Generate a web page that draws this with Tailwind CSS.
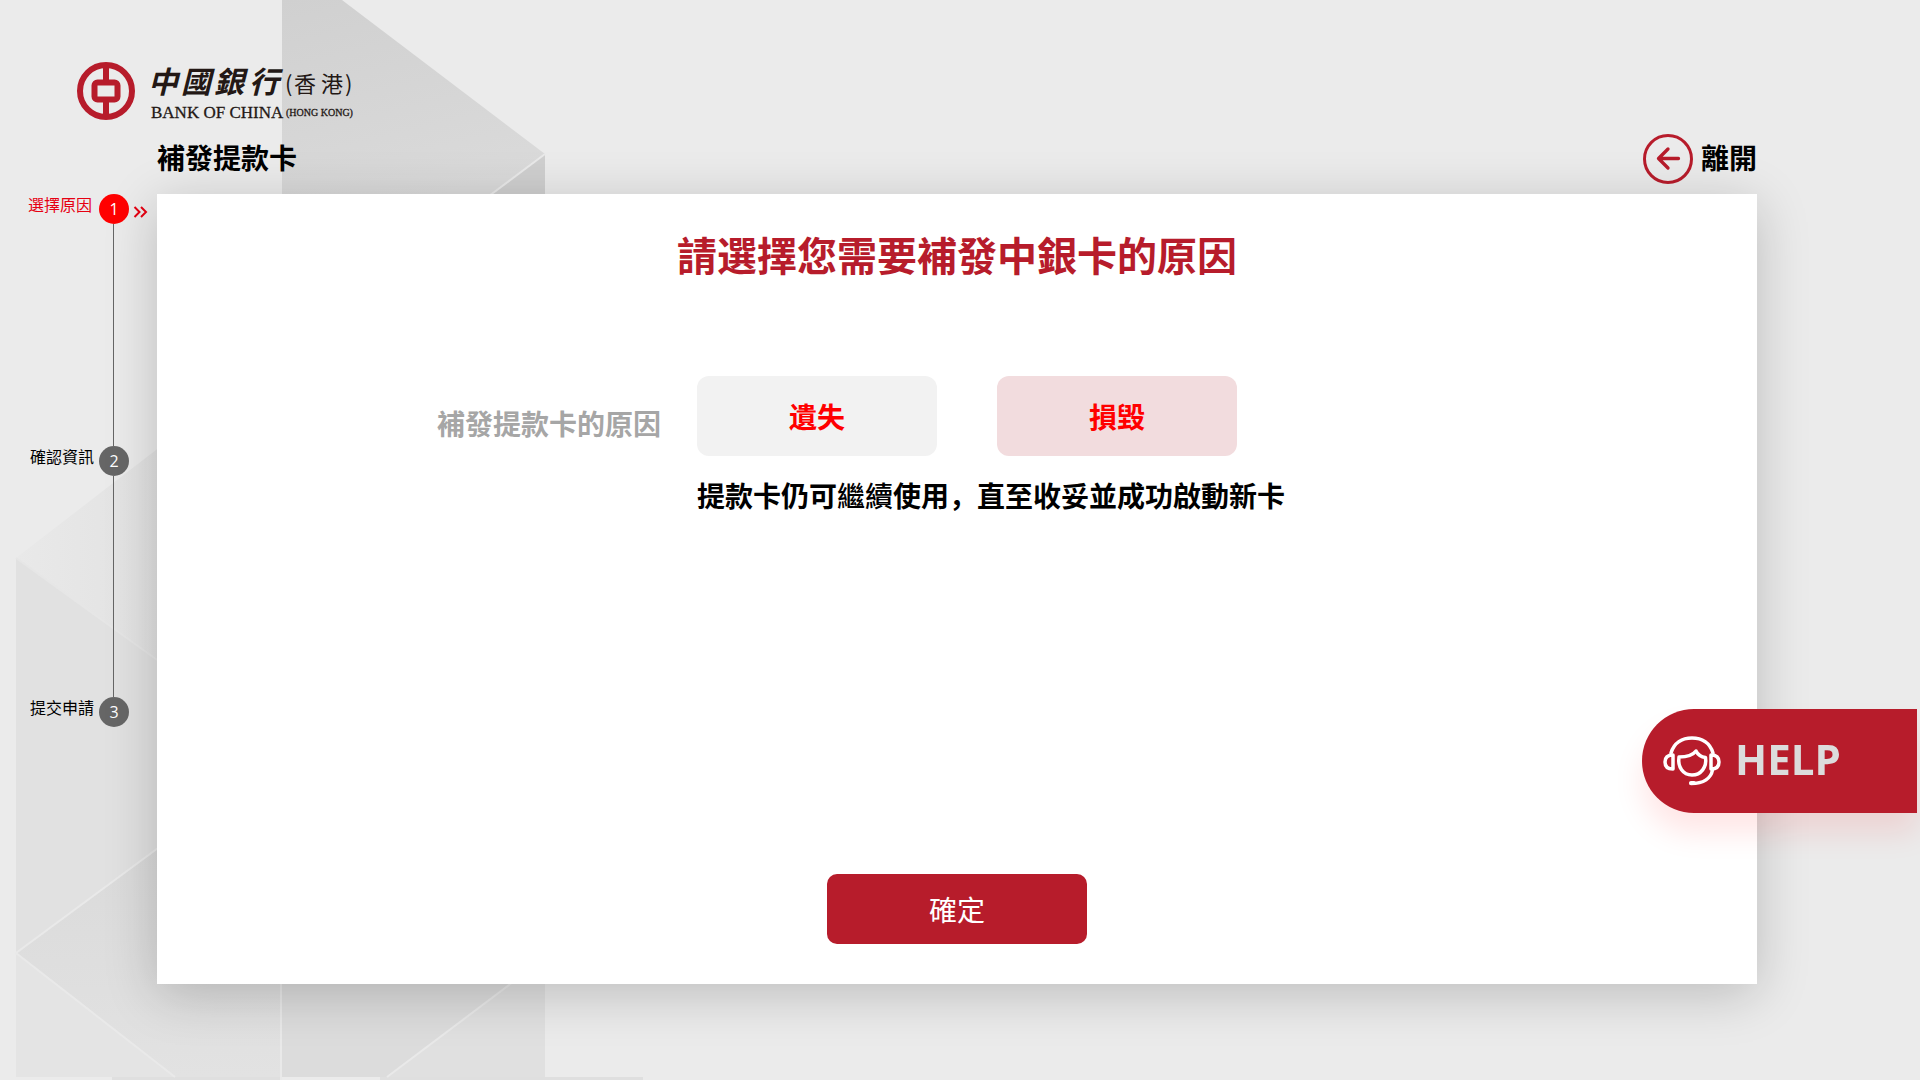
<!DOCTYPE html>
<html lang="zh-Hans">
<head>
    <meta charset="UTF-8">
    <meta name="viewport" content="width=device-width, initial-scale=1.0">
    <title>補發提款卡</title>
    <script src="https://cdn.jsdelivr.net/npm/@tailwindcss/browser@4"></script>
</head>
<body class="relative isolate flex flex-col min-h-screen overflow-x-hidden bg-[#ebebeb] text-black font-['Noto_Sans_CJK_SC',sans-serif]">

    <!-- background -->
    <svg class="absolute inset-0 -z-10 w-full h-full" viewBox="0 0 1920 1080" preserveAspectRatio="xMinYMin slice" aria-hidden="true">
        <defs>
            <linearGradient id="top" x1="0" y1="0" x2="0.3" y2="1">
                <stop offset="0" stop-color="#d0d0d0"/>
                <stop offset="1" stop-color="#dadada"/>
            </linearGradient>
            <linearGradient id="side" x1="0" y1="0" x2="1" y2="0">
                <stop offset="0" stop-color="#e9e9e9"/>
                <stop offset="1" stop-color="#e0e0e0"/>
            </linearGradient>
            <linearGradient id="low" x1="0" y1="0" x2="0" y2="1">
                <stop offset="0" stop-color="#d9d9d9"/>
                <stop offset="1" stop-color="#e2e2e2"/>
            </linearGradient>
        </defs>
        <path fill="url(#top)" d="M282 0h60l203 154v60H282z"/>
        <path fill="#cfcfcf" d="M545 154v60h-80z"/>
        <path stroke="#e9e9e9" stroke-width="2" d="M545 154l-80 60"/>
        <path fill="url(#side)" d="M16 558l184-142v274z"/>
        <path fill="#e1e1e1" d="M16 558l184 133v127L16 953z"/>
        <path fill="url(#low)" d="M16 953l184-136h81v260H175z"/>
        <path fill="#e4e4e4" d="M16 953l159 124H16z"/>
        <path fill="#dcdcdc" d="M281 900h264v177H281z"/>
        <path fill="#e0e0e0" d="M545 958v119H387z"/>
        <path fill="#dfdfdf" d="M112 1077h169v3H112zM380 1077h263v3H380z"/>
        <path fill="none" stroke="#e9e9e9" stroke-width="2" d="M200 817L16 953l159 124M281 900v180M545 958L387 1077"/>
        <path fill="none" stroke="#e6e6e6" stroke-width="2" d="M16 558l184 133"/>
    </svg>

    <header>
        <!-- logo -->
        <a href="#" class="block w-fit pt-[62px] pl-[77px]">
            <svg class="w-[280px] h-[58px] overflow-visible" viewBox="0 0 280 58" role="img" aria-label="中國銀行(香港) BANK OF CHINA (HONG KONG)">
                <g fill="none" stroke="#b71c2b">
                    <circle cx="29" cy="29" r="26" stroke-width="6"/>
                    <rect x="17.500" y="20.500" width="23" height="17" rx="3" stroke-width="6"/>
                    <path stroke-width="6" d="M29 4v15M29 39v15"/>
                </g>
                <g fill="#231815">
                    <g class="font-['Noto_Sans_CJK_TC',sans-serif]">
                        <g class="font-bold italic text-[30px]">
                            <text x="71" y="31">中</text>
                            <text x="104" y="31">國</text>
                            <text x="137" y="31">銀</text>
                            <text x="172" y="31">行</text>
                        </g>
                        <g class="text-[22px]">
                            <text x="208" y="30">(</text>
                            <text x="217" y="30">香</text>
                            <text x="244" y="30">港</text>
                            <text x="268" y="30">)</text>
                        </g>
                    </g>
                    <g class="font-['Liberation_Serif',serif]" stroke="#231815" stroke-width="0.300">
                        <text x="74" y="56" class="text-[17px]">BANK OF CHINA</text>
                        <text x="209" y="54" class="text-[10px]">(HONG KONG)</text>
                    </g>
                </g>
            </svg>
        </a>

        <div class="flex items-center justify-between mt-[14px] mb-[10px] pl-[157px] pr-[163px] h-[50px]">
            <h1 class="pb-1 text-[28px] leading-[40px] font-bold">補發提款卡</h1>
            <button type="button" class="flex items-center gap-2 text-[28px] leading-[40px] font-bold cursor-pointer">
                <svg class="w-[50px] h-[50px]" viewBox="0 0 50 50" fill="none" stroke="#b71c2b" stroke-linecap="round" stroke-linejoin="round" aria-hidden="true">
                    <circle cx="25" cy="25" r="23.500" stroke-width="3"/>
                    <path stroke-width="3.300" d="M35.500 24.500H15.500M25 15l-9.500 9.500L25 34"/>
                </svg>
                <span class="pb-1">離開</span>
            </button>
        </div>
    </header>

    <div class="flex flex-1 pb-24">
        <!-- steps -->
        <ol class="w-[157px] shrink-0 text-base leading-5">
            <li class="flex items-start h-[252px] text-[#e60012]">
                <span class="w-[92px] text-right">選擇原因</span>
                <div class="flex flex-col items-center self-stretch ml-[7px]">
                    <span class="w-[30px] h-[30px] rounded-full bg-[#ff0000] text-white text-center leading-[30px] font-['Open_Sans',sans-serif]">1</span>
                    <span class="flex-1 w-px mr-px bg-[#666]"></span>
                </div>
                <svg class="w-4 h-3 mt-3 ml-1" viewBox="0 0 16 12" fill="none" stroke="#e60012" stroke-width="2" aria-hidden="true">
                    <path d="M1.500 1l5 5-5 5M8 1l5 5-5 5"/>
                </svg>
            </li>
            <li class="flex items-start h-[251px]">
                <span class="w-[94px] text-right">確認資訊</span>
                <div class="flex flex-col items-center self-stretch ml-[5px]">
                    <span class="w-[30px] h-[30px] rounded-full bg-[#666] text-white text-center leading-[30px] font-['Open_Sans',sans-serif]">2</span>
                    <span class="flex-1 w-px mr-px bg-[#666]"></span>
                </div>
            </li>
            <li class="flex items-start">
                <span class="w-[94px] text-right">提交申請</span>
                <span class="w-[30px] h-[30px] ml-[5px] rounded-full bg-[#666] text-white text-center leading-[30px] font-['Open_Sans',sans-serif]">3</span>
            </li>
        </ol>

        <!-- card -->
        <main class="flex flex-col flex-1 items-center mr-[163px] pt-[31px] pb-10 bg-white shadow-[0_10px_50px_rgba(0,0,0,0.2)]">
            <h2 class="text-[40px] leading-[58px] font-bold text-[#b71c2b]">請選擇您需要補發中銀卡的原因</h2>

            <div class="flex gap-9 w-full mt-[93px] pl-[280px] text-[28px] leading-[40px] font-bold">
                <span id="reasonLabel" class="mt-[27px] text-[#a6a6a6]">補發提款卡的原因</span>
                <div>
                    <div class="flex gap-[60px]" role="group" aria-labelledby="reasonLabel">
                        <button type="button" class="w-60 h-20 rounded-xl bg-[#f2f2f2] text-[#ff0000] cursor-pointer" aria-pressed="false">遺失</button>
                        <button type="button" class="w-60 h-20 rounded-xl bg-[#f2dcde] text-[#ff0000] cursor-pointer" aria-pressed="true">損毀</button>
                    </div>
                    <p class="mt-[19px]">提款卡仍可<span class="font-medium">繼續</span>使用，直至收妥並成功啟動新卡</p>
                </div>
            </div>

            <button type="button" class="w-[260px] h-[70px] mt-auto rounded-[10px] bg-[#b71c2b] text-[28px] leading-[40px] text-white cursor-pointer">確定</button>
        </main>
    </div>

    <!-- help -->
    <button type="button" class="fixed right-[3px] bottom-[267px] flex items-center gap-[14px] w-[275px] h-[104px] pl-[21px] rounded-l-full bg-[#b71c2b] shadow-[0_20px_30px_rgba(255,0,0,0.1)] text-[42px] leading-[50px] font-bold text-[#dcdcdc] font-['Open_Sans',sans-serif] cursor-pointer">
        <svg class="w-[58px] h-[50px]" viewBox="0 0 58 50" fill="none" stroke="#fff" stroke-width="3.500" stroke-linecap="round" stroke-linejoin="round" aria-hidden="true">
            <path d="M8 17C11 7 19 2 29 2S47 7 50 17"/>
            <path d="M10 19v14C5 33 2 30.500 2 26S5 19 10 19zM48 19v14c5 0 8-2.500 8-7S53 19 48 19z"/>
            <path d="M16 21c8 0 14-2 17-6 2 4 5 6 9.500 6.500C44 31 38 39 29 39S14.500 31 16 21z"/>
            <path d="M49.500 34C48 42 41 47.500 28 47.500"/>
            <path stroke-width="4" d="M28 47h3"/>
        </svg>
        <span class="pb-1">HELP</span>
    </button>

    <script>
        // chọn lý do
        const reasons = document.querySelectorAll("button[aria-pressed]");
        reasons.forEach(btn => btn.onclick = () => reasons.forEach(b => {
            b.setAttribute("aria-pressed", b === btn);
            b.classList.toggle("bg-[#f2dcde]", b === btn);
            b.classList.toggle("bg-[#f2f2f2]", b !== btn);
        }));
    </script>
</body>
</html>
